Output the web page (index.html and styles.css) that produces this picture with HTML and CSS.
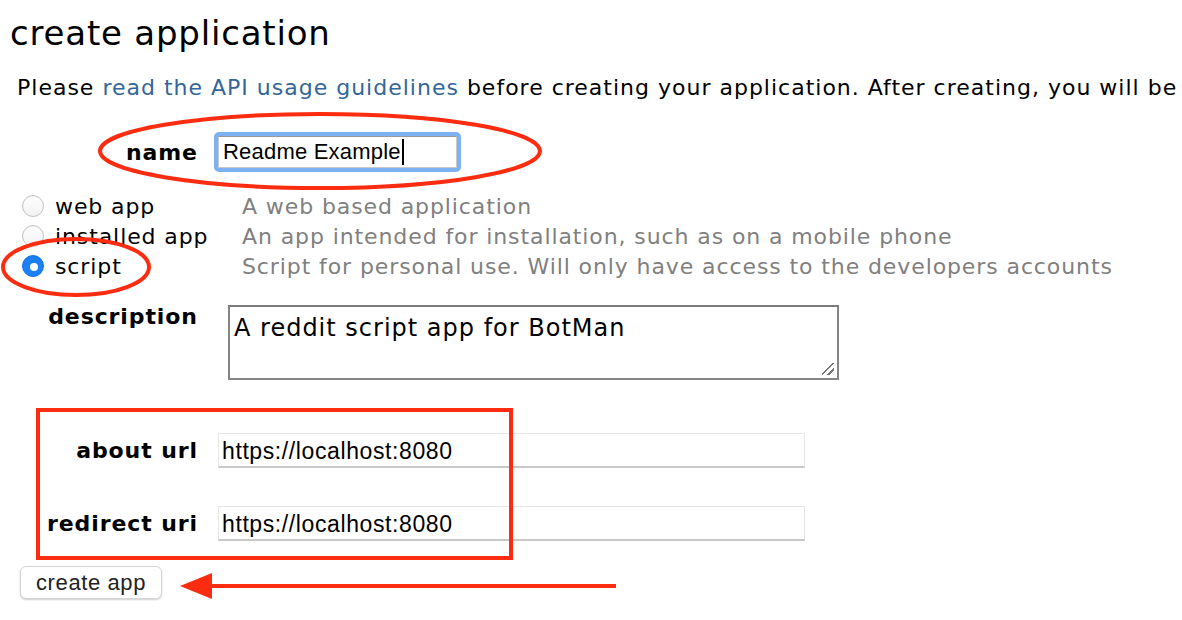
FILE: index.html
```html
<!DOCTYPE html>
<html>
<head>
<meta charset="utf-8">
<link rel="stylesheet" href="styles.css">
</head>
<body>
<div class="page">
  <h1 class="title">create application</h1>
  <p class="intro">Please <a href="#" class="link">read the API usage guidelines</a> before creating your application. After creating, you will be</p>

  <div class="form">
    <div class="row row-name">
      <label class="lbl">name</label>
      <div class="focus-ring"><div class="text-input focused">Readme Example<span class="caret"></span></div></div>
    </div>

    <div class="types">
      <div class="type">
        <span class="radio"></span><span class="type-name">web app</span><span class="type-desc">A web based application</span>
      </div>
      <div class="type">
        <span class="radio"></span><span class="type-name">installed app</span><span class="type-desc">An app intended for installation, such as on a mobile phone</span>
      </div>
      <div class="type">
        <span class="radio checked"></span><span class="type-name">script</span><span class="type-desc">Script for personal use. Will only have access to the developers accounts</span>
      </div>
    </div>

    <div class="row row-desc">
      <label class="lbl">description</label>
      <div class="textarea">A reddit script app for BotMan<span class="grip"></span></div>
    </div>

    <div class="row row-url first">
      <label class="lbl">about url</label>
      <div class="url-input">https://localhost:8080</div>
    </div>
    <div class="row row-url">
      <label class="lbl">redirect uri</label>
      <div class="url-input">https://localhost:8080</div>
    </div>

    <button class="btn">create app</button>
  </div>

  <svg class="marks" width="1182" height="620" viewBox="0 0 1182 620">
    <ellipse cx="320" cy="151" rx="220" ry="37" fill="none" stroke="#fb2c10" stroke-width="4"/>
    <ellipse cx="76" cy="267" rx="73" ry="28" fill="none" stroke="#fb2c10" stroke-width="4"/>
    <rect x="38" y="410" width="473" height="148" fill="none" stroke="#fb2c10" stroke-width="4"/>
    <line x1="205" y1="586" x2="616" y2="586" stroke="#fb2c10" stroke-width="4"/>
    <polygon points="180,586 212,573 212,599" fill="#fb2c10"/>
  </svg>
</div>
</body>
</html>
```

FILE: styles.css
```css
html, body {
  margin: 0;
  padding: 0;
  background: #fff;
}
body {
  font-family: "DejaVu Sans", Verdana, sans-serif;
  color: #000;
  overflow: hidden;
}
.page {
  position: relative;
  width: 1182px;
  height: 620px;
  overflow: hidden;
}
.title {
  margin: 0;
  padding: 13px 0 0 10px;
  font-size: 34px;
  letter-spacing: 0.8px;
  font-weight: normal;
  line-height: 40px;
}
.intro {
  margin: 20px 0 0 17px;
  font-size: 22px;
  letter-spacing: 1px;
  line-height: 30px;
  white-space: nowrap;
}
.link {
  color: #336699;
  text-decoration: none;
}
.form {
  display: flex;
  flex-direction: column;
}
.row {
  display: flex;
  align-items: center;
}
.lbl {
  width: 197px;
  text-align: right;
  font-weight: bold;
  font-size: 22px;
  letter-spacing: 0.9px;
  flex: none;
}
.lbl::after {
  content: "";
  margin-right: -0.9px;
}
.row-name {
  margin-top: 29px;
}
.focus-ring {
  margin-left: 17px;
  border: 4px solid #7eb1f3;
  border-radius: 5px;
  width: 239px;
  height: 32px;
}
.text-input {
  height: 32px;
  box-sizing: border-box;
  border: 1px solid #c8c8c8;
  border-top-color: #999;
  padding-left: 4px;
  font-family: "Liberation Sans", Arial, sans-serif;
  font-size: 22px;
  letter-spacing: 0.2px;
  line-height: 30px;
  display: flex;
  align-items: center;
}
.caret {
  display: inline-block;
  width: 2px;
  height: 26px;
  background: #000;
  margin-left: 1px;
}
.types {
  margin-top: 19px;
  display: flex;
  flex-direction: column;
}
.type {
  display: flex;
  align-items: center;
  height: 30px;
  font-size: 22px;
  letter-spacing: 0.9px;
}
.radio {
  flex: none;
  margin-left: 22px;
  width: 22px;
  height: 22px;
  box-sizing: border-box;
  border-radius: 50%;
  border: 1px solid #c4c4c4;
  background: linear-gradient(#fff, #f2f2f2);
  box-shadow: inset 0 1px 1px rgba(0,0,0,0.05);
  position: relative;
}
.radio.checked {
  background: #1b80f6;
  border-color: #1573e6;
}
.radio.checked::after {
  content: "";
  position: absolute;
  left: 7px;
  top: 7px;
  width: 8px;
  height: 8px;
  border-radius: 50%;
  background: #fff;
}
.type-name {
  margin-left: 11px;
  width: 187px;
  flex: none;
}
.type-desc {
  color: #808080;
  white-space: nowrap;
}
.row-desc {
  margin-top: 24px;
  align-items: flex-start;
}
.row-desc .lbl {
  line-height: 28px;
  margin-top: -2px;
}
.textarea {
  position: relative;
  margin-left: 31px;
  width: 611px;
  height: 75px;
  box-sizing: border-box;
  border: 2px solid #858585;
  border-top-color: #7a7a7a;
  padding: 4px 0 0 4px;
  font-size: 24px;
  letter-spacing: 1px;
  line-height: 34px;
}
.grip {
  position: absolute;
  right: 3px;
  bottom: 3px;
  width: 12px;
  height: 12px;
  background: linear-gradient(135deg, transparent 44%, #777 44%, #777 54%, transparent 54%, transparent 70%, #777 70%, #777 80%, transparent 80%);
}
.row-url {
  margin-top: 38px;
}
.row-url.first {
  margin-top: 53px;
}
.url-input {
  margin-left: 21px;
  width: 587px;
  height: 35px;
  box-sizing: border-box;
  border: 1px solid #e6e6e6;
  border-bottom: 2px solid #c9c9c9;
  padding-left: 3px;
  font-family: "Liberation Sans", Arial, sans-serif;
  font-size: 23px;
  letter-spacing: 0.6px;
  line-height: 34px;
}
.btn {
  align-self: flex-start;
  margin: 25px 0 0 20px;
  width: 142px;
  height: 33px;
  border: 1px solid #d6d6d6;
  border-radius: 6px;
  background: #fff;
  box-shadow: 0 1px 2px rgba(0,0,0,0.2);
  font-family: "Liberation Sans", Arial, sans-serif;
  font-size: 22px;
  letter-spacing: 0.6px;
  color: #222;
  padding: 0;
  line-height: 31px;
}
.marks {
  position: absolute;
  left: 0;
  top: 0;
  pointer-events: none;
}
```
